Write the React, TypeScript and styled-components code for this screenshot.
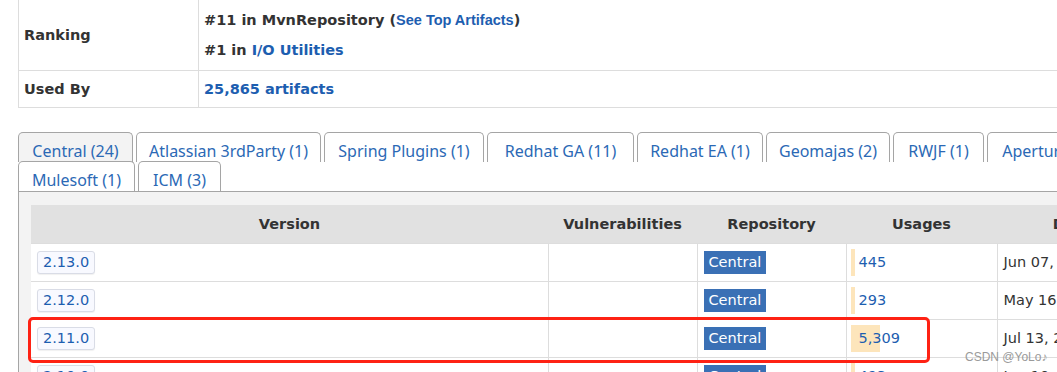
import React from 'react';
import styled, { createGlobalStyle } from 'styled-components';

const TOTAL_USAGES = 25865;

const tabsRowOne = [
	{ label: 'Central (24)', width: 115, active: true },
	{ label: 'Atlassian 3rdParty (1)', width: 185 },
	{ label: 'Spring Plugins (1)', width: 160 },
	{ label: 'Redhat GA (11)', width: 147 },
	{ label: 'Redhat EA (1)', width: 126 },
	{ label: 'Geomajas (2)', width: 124 },
	{ label: 'RWJF (1)', width: 91 },
	{ label: 'Aperture (1)', width: 120 },
];

const tabsRowTwo = [
	{ label: 'Mulesoft (1)', width: 117 },
	{ label: 'ICM (3)', width: 83 },
];

const columns = [
	{ title: 'Version', width: 517 },
	{ title: 'Vulnerabilities', width: 149 },
	{ title: 'Repository', width: 149 },
	{ title: 'Usages', width: 151 },
	{ title: 'Date', width: 150 },
];

const versions = [
	{ version: '2.13.0', repo: 'Central', usages: 445, date: 'Jun 07, 2023' },
	{ version: '2.12.0', repo: 'Central', usages: 293, date: 'May 16, 2023' },
	{ version: '2.11.0', repo: 'Central', usages: 5309, date: 'Jul 13, 2021' },
	{ version: '2.10.0', repo: 'Central', usages: 493, date: 'Jun 10, 2021' },
];

const App: React.FC = () => {
	return (
		<>
			<GlobalStyle />
			<Page>
				<InfoTable>
					<tbody>
						<tr>
							<Label>Ranking</Label>
							<Value>
								#11 in MvnRepository (<NarrowLink>See Top Artifacts</NarrowLink>)
								<br />
								#1 in <Link>I/O Utilities</Link>
							</Value>
						</tr>
						<tr>
							<Label $short>Used By</Label>
							<Value $short>
								<Link>25,865 artifacts</Link>
							</Value>
						</tr>
					</tbody>
				</InfoTable>

				<TabBar>
					<TabRow>
						{tabsRowOne.map((tab) => (
							<Tab key={tab.label} $w={tab.width} $active={tab.active}>
								{tab.label}
							</Tab>
						))}
					</TabRow>
					<TabRow $second>
						{tabsRowTwo.map((tab) => (
							<Tab key={tab.label} $w={tab.width}>
								{tab.label}
							</Tab>
						))}
					</TabRow>
				</TabBar>

				<Panel>
					<VersionsTable>
						<thead>
							<tr>
								{columns.map((col) => (
									<HeadCell key={col.title} $w={col.width}>
										{col.title}
									</HeadCell>
								))}
							</tr>
						</thead>
						<tbody>
							{versions.map((row) => (
								<tr key={row.version}>
									<Cell>
										<VersionBadge>{row.version}</VersionBadge>
									</Cell>
									<Cell />
									<Cell>
										<RepoBadge>{row.repo}</RepoBadge>
									</Cell>
									<UsageCell>
										<Usage>
											<UsageBar
												style={{
													width: Math.max(4, Math.round((row.usages / TOTAL_USAGES) * 140)),
												}}
											/>
											<UsageNumber>{row.usages.toLocaleString('en-US')}</UsageNumber>
										</Usage>
									</UsageCell>
									<Cell>{row.date}</Cell>
								</tr>
							))}
						</tbody>
					</VersionsTable>
					<Highlight />
					<Watermark>CSDN @YoLo♪</Watermark>
				</Panel>
			</Page>
		</>
	);
};

export default App;

const GlobalStyle = createGlobalStyle`
	*, *::before, *::after {
		box-sizing: border-box;
	}
	html, body {
		margin: 0;
		padding: 0;
		background: #fff;
		overflow: hidden;
	}
	body {
		font-family: 'DejaVu Sans', Verdana, sans-serif;
		font-size: 14.5px;
		color: #333;
	}
`;

const Page = styled.div`
	width: 1200px;
	padding-left: 18px;
`;

const InfoTable = styled.table`
	width: 100%;
	margin-top: -1px;
	border-collapse: collapse;
	table-layout: fixed;

	td {
		border: 1px solid #ddd;
	}
`;

const Label = styled.td<{ $short?: boolean }>`
	width: 180px;
	padding: 5px;
	height: ${(p) => (p.$short ? 37 : 71)}px;
	font-weight: bold;
	vertical-align: middle;
`;

const Value = styled.td<{ $short?: boolean }>`
	padding: 5px;
	font-weight: bold;
	line-height: ${(p) => (p.$short ? 26 : 30)}px;
	vertical-align: middle;
`;

const Link = styled.a`
	color: #1d5eb0;
	text-decoration: none;
`;

const NarrowLink = styled(Link)`
	font-family: 'Liberation Sans', Arial, sans-serif;
	font-size: 14.5px;
`;

const TabBar = styled.div`
	margin-top: 24px;
`;

const TabRow = styled.div<{ $second?: boolean }>`
	display: flex;
	gap: 3px;
	margin-top: ${(p) => (p.$second ? -1 : 0)}px;
`;

const Tab = styled.div<{ $w: number; $active?: boolean }>`
	flex: none;
	width: ${(p) => p.$w}px;
	height: 30px;
	padding-top: 6px;
	border: 1px solid #a5a5a5;
	border-bottom: none;
	border-radius: 5px 5px 0 0;
	background: ${(p) => (p.$active ? '#f3f3f3' : '#fff')};
	color: #2b69b5;
	font-family: 'Noto Sans', 'Open Sans', sans-serif;
	font-size: 16px;
	line-height: 24px;
	text-align: center;
	white-space: nowrap;
`;

const Panel = styled.div`
	position: relative;
	padding: 13px 12px 40px;
	background: #f3f3f3;
	border-top: 1px solid #a5a5a5;
	border-left: 1px solid #a5a5a5;
`;

const VersionsTable = styled.table`
	border-collapse: collapse;
	table-layout: fixed;
	background: #fff;
`;

const HeadCell = styled.th<{ $w: number }>`
	width: ${(p) => p.$w}px;
	height: 38px;
	padding: 0 6px;
	background: #e1e1e1;
	font-weight: bold;
	text-align: center;
	white-space: nowrap;
	color: #333;
`;

const Cell = styled.td`
	height: 38px;
	padding: 7px 6px;
	border-top: 1px solid #ddd;
	border-left: 1px solid #ddd;
	white-space: nowrap;
	vertical-align: middle;

	&:first-child {
		border-left: none;
	}
`;

const UsageCell = styled(Cell)`
	padding: 5px 4px;
`;

const VersionBadge = styled.a`
	display: inline-block;
	height: 23px;
	padding: 0 5px;
	line-height: 21px;
	border: 1px solid #d9dce6;
	border-radius: 3px;
	background: #f8f9ff;
	box-shadow: 0 1px 1px rgba(0, 0, 0, 0.06);
	color: #1d5eb0;
`;

const RepoBadge = styled.span`
	display: inline-block;
	height: 23px;
	padding: 0 5px;
	line-height: 23px;
	background: #3a70b5;
	color: #fff;
`;

const Usage = styled.div`
	position: relative;
	height: 27px;
	line-height: 27px;
	padding-left: 8px;
`;

const UsageBar = styled.div`
	position: absolute;
	left: 0;
	top: 0;
	bottom: 0;
	background: #fde5bb;
`;

const UsageNumber = styled.a`
	position: relative;
	color: #1d5eb0;
`;

const Highlight = styled.div`
	position: absolute;
	left: 9px;
	top: 125px;
	width: 902px;
	height: 46px;
	border: 3px solid #fe2214;
	border-radius: 5px;
	pointer-events: none;
`;

const Watermark = styled.div`
	position: absolute;
	left: 946px;
	top: 158px;
	font-family: 'Liberation Sans', Arial, sans-serif;
	font-size: 12px;
	color: #9a9a9a;
	white-space: nowrap;
`;
